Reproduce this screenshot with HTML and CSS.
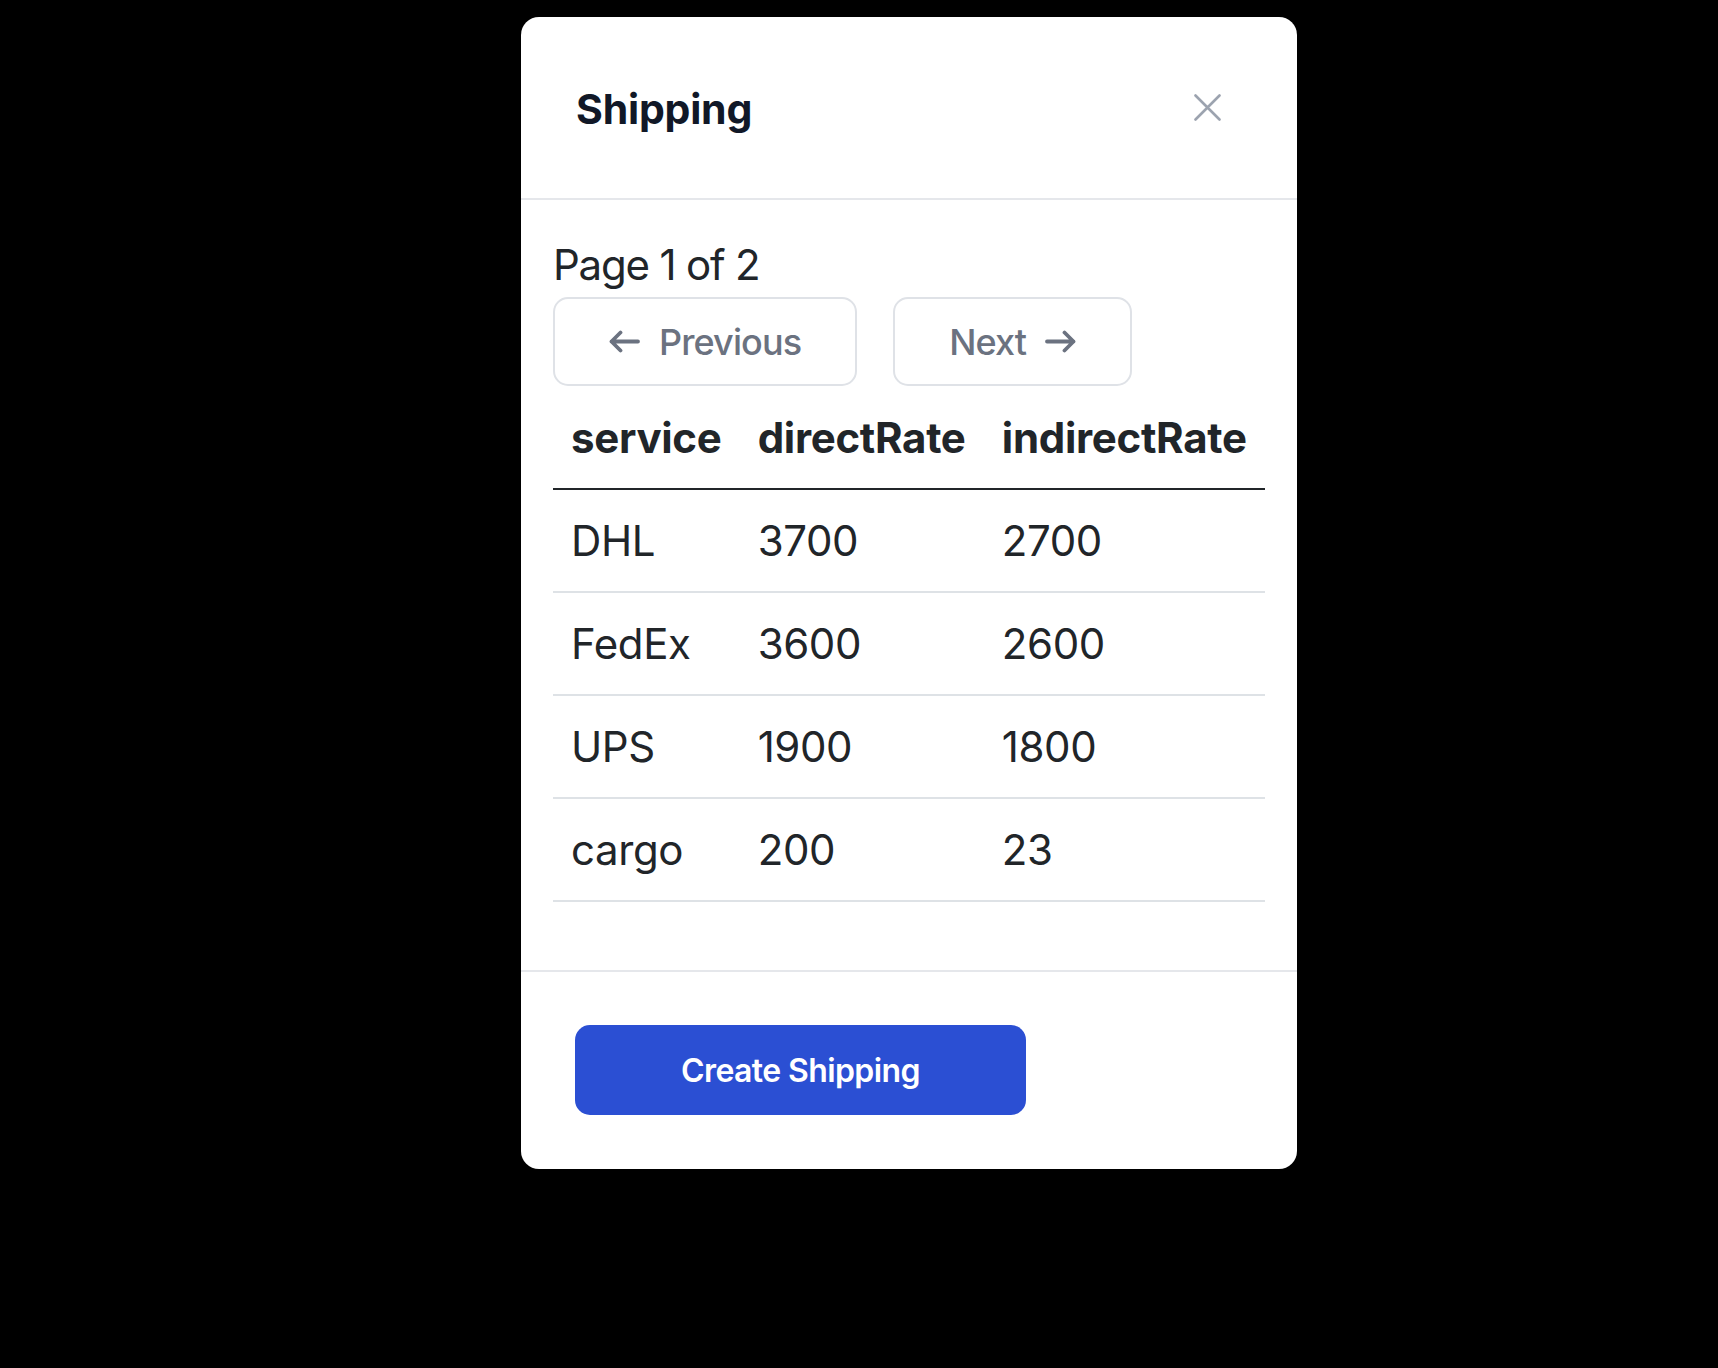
FILE: index.html
```html
<!DOCTYPE html>
<html lang="en">
<head>
<meta charset="utf-8">
<title>Shipping</title>
<link rel="stylesheet" href="styles.css">
</head>
<body>
<div class="overlay">
  <div class="modal">
    <div class="modal-header">
      <h2 class="modal-title">Shipping</h2>
      <button class="close-btn" aria-label="Close">
        <svg width="27" height="27" viewBox="0 0 27 27" fill="none" stroke="currentColor" stroke-width="2.6" stroke-linecap="round"><path d="M1.5 1.5L25.5 25.5M25.5 1.5L1.5 25.5"/></svg>
      </button>
    </div>
    <div class="modal-body">
      <p class="page-info">Page 1 of 2</p>
      <div class="pager">
        <button class="pager-btn prev">
          <svg width="31" height="23" viewBox="0 0 31 23" fill="none" stroke="currentColor" stroke-width="3.8" stroke-linecap="round" stroke-linejoin="round"><path d="M29 11.5H2.5M11.5 2.5L2.5 11.5L11.5 20.5"/></svg>
          <span>Previous</span>
        </button>
        <button class="pager-btn next">
          <span>Next</span>
          <svg width="31" height="23" viewBox="0 0 31 23" fill="none" stroke="currentColor" stroke-width="3.8" stroke-linecap="round" stroke-linejoin="round"><path d="M2 11.5H28.5M19.5 2.5L28.5 11.5L19.5 20.5"/></svg>
        </button>
      </div>
      <table class="rates">
        <thead>
          <tr><th>service</th><th>directRate</th><th>indirectRate</th></tr>
        </thead>
        <tbody>
          <tr><td>DHL</td><td>3700</td><td>2700</td></tr>
          <tr><td>FedEx</td><td>3600</td><td>2600</td></tr>
          <tr><td>UPS</td><td>1900</td><td>1800</td></tr>
          <tr><td>cargo</td><td>200</td><td>23</td></tr>
        </tbody>
      </table>
    </div>
    <div class="modal-footer">
      <button class="primary-btn">Create Shipping</button>
    </div>
  </div>
</div>
</body>
</html>
```

FILE: styles.css
```css
* { box-sizing: border-box; }
html, body {
  margin: 0;
  padding: 0;
  background: #000;
  font-family: Inter, "Noto Sans", "Liberation Sans", sans-serif;
}
.overlay {
  min-height: 1368px;
  display: flex;
  justify-content: center;
  align-items: flex-start;
  padding-top: 17px;
  padding-left: 100px;
}
.modal {
  width: 776px;
  background: #fff;
  border-radius: 18px;
  overflow: hidden;
}
.modal-header {
  height: 183px;
  display: flex;
  align-items: center;
  justify-content: space-between;
  padding: 0 76px 0 55px;
  border-bottom: 2px solid #e5e7eb;
}
.modal-title {
  margin: 0;
  font-size: 41px;
  font-weight: 700;
  color: #111827;
  line-height: 1;
  letter-spacing: -0.2px;
  padding-top: 4px;
}
.close-btn {
  background: none;
  border: 0;
  padding: 0;
  margin: 0;
  color: #9ca3af;
  display: flex;
  cursor: pointer;
}
.modal-body {
  padding: 33px 32px 68px 32px;
}
.page-info {
  margin: 0;
  font-size: 42px;
  line-height: 63px;
  color: #212529;
  letter-spacing: -1.2px;
}
.pager {
  display: flex;
  gap: 36px;
  margin-top: 1px;
}
.pager-btn {
  height: 89px;
  display: flex;
  align-items: center;
  gap: 19px;
  padding: 0 54px;
  background: #fff;
  border: 2px solid #dfe2e7;
  border-radius: 15px;
  color: #6b7280;
  font-family: inherit;
  font-size: 36px;
  font-weight: 500;
  letter-spacing: -0.9px;
}
.rates {
  width: 100%;
  border-collapse: collapse;
  color: #212529;
  font-size: 42px;
  line-height: 63px;
  margin-top: 1px;
}
.rates th, .rates td {
  text-align: left;
  padding: 19px 18px;
}
.rates th {
  font-weight: 700;
  border-bottom: 2px solid #212529;
  letter-spacing: -0.3px;
}
.rates td {
  border-bottom: 2px solid #dee2e6;
  letter-spacing: -0.4px;
}
.modal-footer {
  border-top: 2px solid #e5e7eb;
  padding: 53px 54px 54px;
}
.primary-btn {
  width: 451px;
  height: 90px;
  background: #2b4fd3;
  color: #fff;
  border: 0;
  border-radius: 15px;
  font-family: inherit;
  font-size: 32px;
  font-weight: 600;
  letter-spacing: -0.6px;
}
```
